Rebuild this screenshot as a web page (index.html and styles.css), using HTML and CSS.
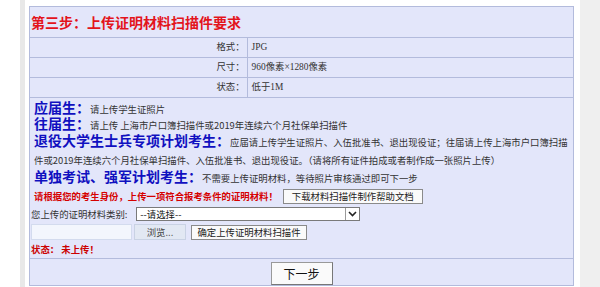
FILE: index.html
```html
<!DOCTYPE HTML>
<html>
    <head>
        <meta charset="utf-8">
        <link rel="stylesheet" href="styles.css">
    </head>

    <body>
        <div class="page">
            <div class="rail-left"></div>
            <div class="main">
                <table class="req">
                    <tr>
                        <td colspan="2" class="title">第三步：上传证明材料扫描件要求</td>
                    </tr>
                    <tr class="spec">
                        <td class="label">格式：</td>
                        <td class="value">JPG</td>
                    </tr>
                    <tr class="spec">
                        <td class="label">尺寸：</td>
                        <td class="value">960像素×1280像素</td>
                    </tr>
                    <tr class="spec">
                        <td class="label">状态：</td>
                        <td class="value">低于1M</td>
                    </tr>
                    <tr>
                        <td colspan="2" class="desc">
                            <p class="who one"><b>应届生：</b>请上传学生证照片</p>
                            <p class="who one"><b>往届生：</b>请上传 上海市户口簿扫描件或2019年连续六个月社保单扫描件</p>
                            <p class="who"><b>退役大学生士兵专项计划考生：</b>应届请上传学生证照片、入伍批准书、退出现役证；往届请上传上海市户口簿扫描件或2019年连续六个月社保单扫描件、入伍批准书、退出现役证。（请将所有证件拍成或者制作成一张照片上传）</p>
                            <p class="who"><b>单独考试、强军计划考生：</b>不需要上传证明材料，等待照片审核通过即可下一步</p>
                            <div class="row notice">
                                <span class="warn">请根据您的考生身份，上传一项符合报考条件的证明材料！</span>
                                <button class="btn help">下载材料扫描件制作帮助文档</button>
                            </div>
                            <div class="row">
                                <span>您上传的证明材料类别:</span>
                                <div class="select">
                                    <span class="select-text">--请选择--</span>
                                    <span class="select-arrow">
                                        <svg width="9" height="6" viewBox="0 0 9 6"><polyline points="1,1 4.5,4.5 8,1" fill="none" stroke="#222" stroke-width="1.6"/></svg>
                                    </span>
                                </div>
                            </div>
                            <div class="row">
                                <span class="file-path"></span>
                                <button class="btn browse">浏览...</button>
                                <button class="btn upload">确定上传证明材料扫描件</button>
                            </div>
                            <div class="status">状态： 未上传！</div>
                        </td>
                    </tr>
                    <tr>
                        <td colspan="2" class="foot"><button class="btn next">下一步</button></td>
                    </tr>
                </table>
            </div>
            <div class="rail-right"></div>
        </div>
    </body>
</html>
```

FILE: styles.css
```css
body{
    margin:0;
    background-color:#fff;
    font-family:"Noto Sans CJK SC", "Liberation Sans", sans-serif;
    color:#333;
}

.page{
    display:flex;
    height:287px;
    padding-left:20px;
}

.rail-left{
    width:5px;
    background-color:#e8e8e8;
}

.main{
    width:545px;
    padding:6px 6px 0 4px;
}

.rail-right{
    width:20px;
    background-color:#efefef;
}

.req{
    width:545px;
    border-collapse:collapse;
    background-color:#e3e6fa;
}

.req td{
    border:1px solid #b3bbdc;
    padding:0;
}

.title{
    height:30px;
    padding-left:1px !important;
    color:#e3141c;
    font-size:14px;
    font-weight:bold;
    line-height:30px;
}

.spec td{
    height:19px;
    font-size:9.4px;
    line-height:19px;
    font-family:"Liberation Serif", "Noto Sans CJK SC", serif;
}

.label{
    width:40%;
    text-align:right;
    padding-right:2px !important;
}

.value{
    padding-left:4px !important;
}

.desc{
    padding:3px 0 1px 1px !important;
    font-size:9.4px;
    vertical-align:top;
}

.who{
    margin:0;
    padding-left:3px;
    line-height:18px;
}

.who.one{
    line-height:16px;
}

/* big label must not stretch the line box */
.who b{
    color:#1010c0;
    font-size:14px;
    line-height:0;
}

.row{
    display:flex;
    align-items:center;
    height:18px;
}

.notice{
    padding-left:3px;
}

.warn{
    color:#d60000;
    font-weight:bold;
}

.btn{
    font-family:"Noto Sans CJK SC", sans-serif;
    font-size:9.4px;
    color:#222;
    background-color:#fafafa;
    border:1px solid #8a8a8a;
    border-radius:0;
    padding:0;
    height:15px;
    line-height:13px;
}

.help{
    width:140px;
    margin-left:5px;
}

.select{
    display:flex;
    margin-left:9px;
    width:224px;
    height:14px;
    background-color:#fff;
    border:1px solid #7a7a7a;
    box-sizing:border-box;
}

.select-text{
    flex:1;
    padding-left:3px;
    line-height:12px;
    color:#111;
}

.select-arrow{
    width:13px;
    display:flex;
    align-items:center;
    justify-content:center;
    border-left:1px solid #9a9a9a;
}

.file-path{
    width:101px;
    height:16px;
    background-color:#f3f6fd;
    border:1px solid #d3dbee;
    box-sizing:border-box;
}

.browse{
    width:52px;
    height:16px;
    margin-left:2px;
    background-color:#e2e8f3;
    border-color:#c9d2e4;
    color:#444;
}

.upload{
    width:116px;
    height:15px;
    margin-left:5px;
}

.status{
    color:#cc0000;
    font-weight:bold;
    line-height:16px;
}

.foot{
    height:24px;
    text-align:center;
}

.next{
    width:62px;
    height:23px;
    font-size:12px;
    line-height:21px;
    color:#111;
    border-color:#999 #777 #777 #999;
    vertical-align:middle;
}
```
